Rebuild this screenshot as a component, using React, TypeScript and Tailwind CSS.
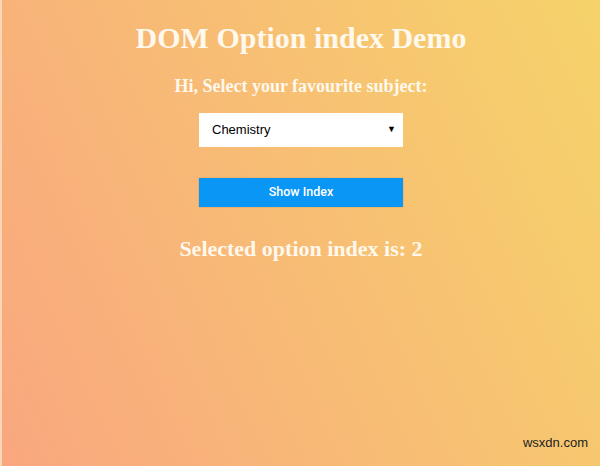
export default function App() {
  return (
    <div className="relative w-[600px] h-[466px] overflow-hidden bg-[linear-gradient(65deg,#f9a77f,#f6d36a)] border-l-2 border-[#fbd7b5]">
      <div className="flex flex-col items-center pt-[21px] font-['Liberation_Serif',serif] text-[#fff8ec]">
        <h1 className="text-[30px] font-bold leading-[34px]">DOM Option index Demo</h1>
        <h3 className="mt-[21px] text-[18px] font-bold leading-[20px]">Hi, Select your favourite subject:</h3>
        <div className="mt-[17px] w-[204px] h-[34px] bg-white flex items-center justify-between pl-[13px] pr-[7px] font-['Liberation_Sans',sans-serif] text-[13px] text-black">
          <span>Chemistry</span>
          <span className="text-[9px]">▼</span>
        </div>
        <button className="mt-[31px] w-[204px] h-[29px] bg-[#0a96f4] text-white text-[12.5px] font-medium font-['Roboto',sans-serif] shadow-[0_0_1px_rgba(0,0,0,0.3)]">
          Show Index
        </button>
        <h2 className="mt-[30px] text-[22px] font-bold leading-[24px]">Selected option index is: 2</h2>
      </div>
      <div className="absolute right-[12px] bottom-[15px] font-['Liberation_Sans',sans-serif] text-[13px] leading-[16px] text-[#222]">wsxdn.com</div>
    </div>
  );
}
